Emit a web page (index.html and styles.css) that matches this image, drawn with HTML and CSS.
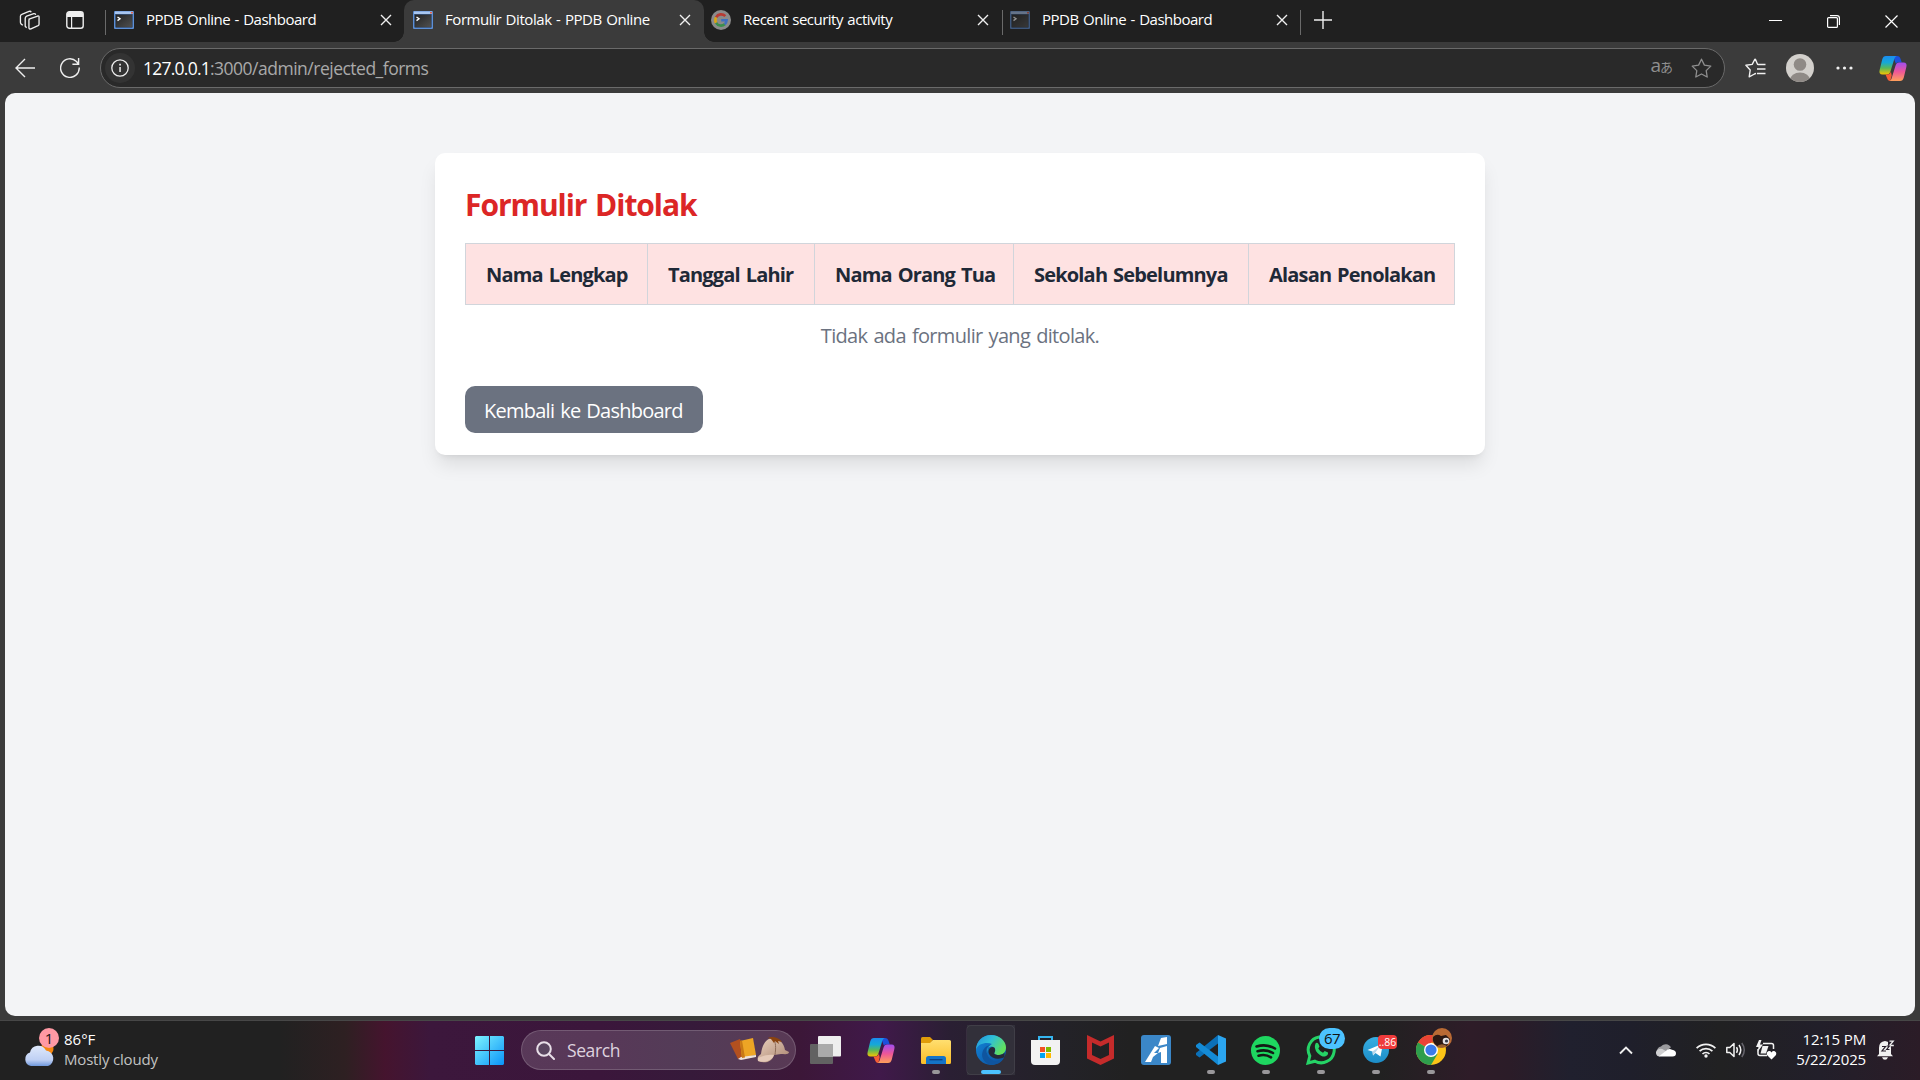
FILE: index.html
```
<!DOCTYPE html>
<html lang="id">
<head>
<meta charset="utf-8">
<title>Formulir Ditolak - PPDB Online</title>
<link rel="stylesheet" href="styles.css">
</head>
<body>
<svg class="defs" width="0" height="0" aria-hidden="true">
  <defs>
    <linearGradient id="cpA" x1="0" y1="0" x2="0" y2="1"><stop offset="0" stop-color="#1b8cf0"/><stop offset=".35" stop-color="#15a8d8"/><stop offset=".65" stop-color="#58b85a"/><stop offset="1" stop-color="#f5c400"/></linearGradient>
    <linearGradient id="cpB" x1="0" y1="0" x2="0" y2="1"><stop offset="0" stop-color="#a04df0"/><stop offset=".5" stop-color="#ee5698"/><stop offset="1" stop-color="#ffa05a"/></linearGradient>
    <linearGradient id="win" x1="0" y1="0" x2="1" y2="1"><stop offset="0" stop-color="#7df3ff"/><stop offset="1" stop-color="#0a93f8"/></linearGradient>
    <linearGradient id="fold" x1="0" y1="0" x2="0" y2="1"><stop offset="0" stop-color="#ffdf70"/><stop offset="1" stop-color="#fbbd27"/></linearGradient>
    <linearGradient id="edgeTop" x1="0" y1="0" x2="1" y2=".5"><stop offset="0" stop-color="#2390dc"/><stop offset=".5" stop-color="#2fc0d8"/><stop offset="1" stop-color="#62e05e"/></linearGradient>
    <linearGradient id="edgeLow" x1="0" y1="0" x2="1" y2="1"><stop offset="0" stop-color="#1287dc"/><stop offset="1" stop-color="#0c4c98"/></linearGradient>
    <linearGradient id="cloud" x1="0" y1="0" x2="0" y2="1"><stop offset="0" stop-color="#dfe9fb"/><stop offset=".7" stop-color="#bfd0f4"/><stop offset="1" stop-color="#6f98dc"/></linearGradient>
    <linearGradient id="cap" x1="0" y1="0" x2="1" y2="1"><stop offset="0" stop-color="#ead0bd"/><stop offset="1" stop-color="#a98570"/></linearGradient>
    <linearGradient id="tg" x1="0" y1="0" x2="0" y2="1"><stop offset="0" stop-color="#37aee2"/><stop offset="1" stop-color="#1c8dc8"/></linearGradient>
    <linearGradient id="term" x1="0" y1="0" x2="1" y2="1"><stop offset="0" stop-color="#222"/><stop offset="1" stop-color="#505050"/></linearGradient>
    <symbol id="terminal" viewBox="0 0 20 18">
      <rect width="20" height="18" rx="1" fill="#5c8fd6"/><rect x="1" y=".5" width="18" height="2.5" fill="#a9c6ef"/><rect x="17" y="1" width="2" height="1.5" fill="#e0604c"/><rect x="1.8" y="3.6" width="16.4" height="12.6" fill="url(#term)" stroke="#222c3c" stroke-width=".5"/>
      <path d="M3.5 6l2.5 1.8-2.5 1.8" fill="none" stroke="#fff" stroke-width="1.4"/>
    </symbol>
    <symbol id="close" viewBox="0 0 12 12"><path d="M1 1l10 10M11 1L1 11" stroke="#f0f0f0" stroke-width="1.4" fill="none"/></symbol>
    <symbol id="copilot" viewBox="0 0 28 27">
      <path d="M14 1h4c2 0 3 1 3.600 3l1.200 3.500h-4.500l-1.500 1z" fill="#1c50dc"/>
      <path d="M7 1h10.500c-1.500.8-2 2.200-2.600 4.300L11.600 16c-.8 2.400-1.700 3.500-4 3.500H3.500C.8 19.500 0 17.600.6 15.200L3.200 4.500C3.900 2.100 5 1 7 1z" fill="url(#cpA)"/>
      <path d="M6.500 19.500h2c2 0 2.700-1 3.400-3l.8 4-1.400 5.500C9.500 26 8.700 25 8 23z" fill="#f65c35"/>
      <path d="M21 26H10.500c1.500-.8 2-2.200 2.600-4.300L16.400 11c.8-2.400 1.700-3.500 4-3.500h4.100c2.700 0 3.500 1.900 2.900 4.300l-2.600 10.700C24.100 24.900 23 26 21 26z" fill="url(#cpB)"/>
    </symbol>
  </defs>
</svg>

<div class="browser">
  <header class="tabstrip">
    <div class="strip-tools">
      <svg width="21" height="21" viewBox="0 0 22 22" fill="none" stroke="#eee" stroke-width="1.400" stroke-linejoin="round"><path d="M10.500 9.500l9-3.200q1.500-.4 1.500 1v7.500q0 1-1 1.500l-7.500 3.500q-1.800.5-2.100-1v-8q0-1 .6-1.300z"/><path d="M8 18.500l-1.500-1.500V9q0-1.800 1.500-2.500L15.500 3.800q1.600-.3 1.900 1.300M4 16l-1.700-1.200q-.8-.8-.8-2V6.500q0-1.500 1.400-2L10.500 1.500q1.700-.5 2.300.8"/></svg>
      <svg class="tab-actions" width="18" height="18" viewBox="0 0 18 18"><rect x=".8" y=".8" width="16.400" height="16.400" rx="2.500" fill="none" stroke="#eee" stroke-width="1.400"/><path d="M1 6V3a2 2 0 0 1 2-2h12a2 2 0 0 1 2 2v3zM5 6h1.200v11H5z" fill="#eee"/></svg>
    </div>
    <div class="tab tab-ruled"><svg class="favicon" width="20" height="18"><use href="#terminal"/></svg><span class="tab-title">PPDB Online - Dashboard</span><svg class="tab-close" width="12" height="12"><use href="#close"/></svg></div>
    <div class="tab tab-active"><svg class="favicon" width="20" height="18"><use href="#terminal"/></svg><span class="tab-title title-form">Formulir Ditolak - PPDB Online</span><svg class="tab-close" width="12" height="12"><use href="#close"/></svg></div>
    <div class="tab tab-google"><svg class="favicon" width="20" height="20" viewBox="0 0 20 20" fill="none" stroke-width="2.600"><circle cx="10" cy="10" r="10" fill="#8b8b8b"/><path d="M14.300 6.200A5.700 5.700 0 0 0 5.100 7.300" stroke="#b83a33"/><path d="M5.100 7.300a5.700 5.700 0 0 0 0 5.600" stroke="#d9a414"/><path d="M5.100 12.900a5.700 5.700 0 0 0 8.600 1.300" stroke="#3a8f4c"/><path d="M13.700 14.200a5.700 5.700 0 0 0 1.900-4H10.200" stroke="#3f6fc0"/></svg><span class="tab-title">Recent security activity</span><svg class="tab-close" width="12" height="12"><use href="#close"/></svg></div>
    <div class="tab tab-last"><svg class="favicon favicon-dim" width="20" height="18"><use href="#terminal"/></svg><span class="tab-title">PPDB Online - Dashboard</span><svg class="tab-close" width="12" height="12"><use href="#close"/></svg></div>
    <svg class="new-tab" width="18" height="18" viewBox="0 0 18 18"><path d="M9 0v18M0 9h18" stroke="#eee" stroke-width="1.400"/></svg>
    <div class="window-buttons">
      <svg width="13" height="13" viewBox="0 0 13 13"><path d="M0 5.500h13" stroke="#fff"/></svg>
      <svg width="13" height="13" viewBox="0 0 13 13" fill="none" stroke="#fff" stroke-width="1.200"><rect x=".6" y="2.600" width="9.800" height="9.800" rx="1"/><path d="M3 .6h7q2.400 0 2.400 2.400v7"/></svg>
      <svg width="13" height="13" viewBox="0 0 13 13"><path d="M.5.5l12 12M12.500.5l-12 12" stroke="#fff" stroke-width="1.200"/></svg>
    </div>
  </header>

  <nav class="toolbar">
    <svg class="back" width="20" height="20" viewBox="0 0 20 20" fill="none" stroke="#eee" stroke-width="1.400"><path d="M20 10H1M10 1L1 10l9 9"/></svg>
    <svg class="reload" width="20" height="20" viewBox="0 0 20 20" fill="none" stroke="#eee" stroke-width="1.400"><path d="M19.200 9.500a9.300 9.300 0 1 1-2.700-6L18.500 6M18.600 0v6.200h-6.200"/></svg>
    <div class="address">
      <span class="site-info"><svg width="18" height="18" viewBox="0 0 18 18"><circle cx="9" cy="9" r="8.200" fill="none" stroke="#eee" stroke-width="1.300"/><path d="M8.300 8h1.500v5H8.300zM8.200 4.800h1.700v1.700H8.200z" fill="#eee"/></svg></span>
      <span class="host">127.0.0.1</span><span class="path">:3000/admin/rejected_forms</span>
      <span class="translate">a<small>あ</small></span>
      <svg class="fav-star" width="21" height="20" viewBox="0 0 21 20"><path d="M10.500 1.200l2.900 5.900 6.400 1-4.600 4.500 1 6.400-5.700-3-5.700 3 1-6.400L1.200 8.100l6.400-1z" fill="none" stroke="#8f8f8f" stroke-width="1.300" stroke-linejoin="round"/></svg>
    </div>
    <svg class="favorites" width="21" height="20" viewBox="0 0 21 20" fill="none" stroke="#f0f0f0" stroke-width="1.400" stroke-linejoin="round"><path d="M13.500 6.600L12.500 6.300 10.500 1.500q-.4-.6-.8 0L7.200 6.400.9 7.300l4.300 4.700-1 6.800 5.300-2.800 1.500-.6M13 6.500H20.500M12 11h8.500M12 15.500h8.500"/></svg>
    <svg class="avatar" width="28" height="28" viewBox="0 0 28 28"><defs><clipPath id="av"><circle cx="14" cy="14" r="14"/></clipPath></defs><g clip-path="url(#av)"><rect width="28" height="28" fill="#d3d0cc"/><circle cx="14" cy="10.500" r="6.300" fill="#8f8a86"/><ellipse cx="14" cy="26" rx="10" ry="7.500" fill="#8f8a86"/></g></svg>
    <svg class="more" width="17" height="4" viewBox="0 0 17 4" fill="#f0f0f0"><circle cx="2" cy="2" r="1.600"/><circle cx="8.500" cy="2" r="1.600"/><circle cx="15" cy="2" r="1.600"/></svg>
    <svg class="sidebar-copilot" width="28" height="27"><use href="#copilot"/></svg>
  </nav>

  <main class="page">
    <section class="card">
      <h1 class="card-title">Formulir Ditolak</h1>
      <table class="forms">
        <colgroup><col class="c-name"><col class="c-date"><col class="c-parent"><col class="c-school"><col class="c-reason"></colgroup>
        <thead><tr><th>Nama Lengkap</th><th>Tanggal Lahir</th><th>Nama Orang Tua</th><th>Sekolah Sebelumnya</th><th>Alasan Penolakan</th></tr></thead>
      </table>
      <p class="empty">Tidak ada formulir yang ditolak.</p>
      <a class="button">Kembali ke Dashboard</a>
    </section>
  </main>
</div>

<footer class="taskbar">
  <div class="weather">
    <div class="weather-icon">
      <svg width="31" height="28" viewBox="0 0 31 28"><circle cx="23" cy="9" r="6.500" fill="#f5860f"/><path d="M7 26a7 7 0 0 1-1-13.500A8.500 8.500 0 0 1 22 10.500 8 8 0 0 1 24 26z" fill="url(#cloud)"/></svg>
      <span class="weather-badge">1</span>
    </div>
    <div class="weather-text"><span>86°F</span><span class="weather-sub">Mostly cloudy</span></div>
  </div>
  <div class="app start"><svg width="29" height="29" viewBox="0 0 29 29" fill="url(#win)"><path d="M1 0h13v14H0V1zM15 0h13l1 1v13H15zM0 15h14v14H1l-1-1zM15 15h14v13l-1 1H15z"/></svg></div>
  <div class="search">
    <svg width="19" height="19" viewBox="0 0 19 19" fill="none" stroke="#e8dfe8" stroke-width="2"><circle cx="8" cy="8" r="6.800" fill="#5a4660"/><path d="M13 13l5 5" stroke-linecap="round"/></svg>
    <span class="search-label">Search</span>
    <svg class="search-art" width="59" height="26" viewBox="0 0 59 26">
      <path d="M0 6l10-4 7 17-9 3z" fill="#b3501f"/><path d="M10 4l13-3 3 17-14 3z" fill="#eda525"/><path d="M8 22l3-2 15-2v2l-15 3z" fill="#eee3dc"/><path d="M10 4l2-.5 3 17-3 .5z" fill="#c87916"/>
      <path d="M31 17C32 7 37 1 43 1s11 5 12 12l4 2c0 3-5 2-8 2l-7 1c-2 7-9 9-16 6-1-3 0-5 3-7z" fill="url(#cap)"/><path d="M43 1c3 4 3 10 2 17" stroke="#8d6b58" fill="none"/><path d="M38 1c3-2 11-1 14 4l-4-1 1 3-4-3-1 2-3-4z" fill="#8a4310"/><path d="M28 21c5-2 9-4 16-3-2 6-9 8-16 6z" fill="#e4c9b8"/>
    </svg>
  </div>
  <div class="apps">
    <div class="app"><svg width="31" height="28" viewBox="0 0 31 28"><rect y="8" width="23" height="20" rx="1" fill="#626262"/><rect x="8" width="23" height="20.500" rx="1" fill="#eee"/><path d="M8 8h15v12.500H8z" fill="#aaa"/></svg></div>
    <div class="app"><svg width="28" height="27"><use href="#copilot"/></svg></div>
    <div class="app app-open"><svg width="30" height="27" viewBox="0 0 30 27"><path d="M0 1.500Q0 0 1.500 0H9l3 3-3 4H0z" fill="#e09c0a"/><path d="M0 6h9l3-3h16.500Q30 3 30 4.500v21q0 1.500-1.500 1.500h-27Q0 27 0 25.500z" fill="url(#fold)"/><path d="M5 27v-5.500Q5 19 7.500 19h15q2.500 0 2.500 2.500V27z" fill="#1474c8"/><path d="M8.500 22.700h13" stroke="#0b4080" stroke-width="1.300"/></svg></div>
    <div class="app app-current"><svg width="30" height="30" viewBox="0 0 30 30"><circle cx="15" cy="15" r="15" fill="url(#edgeLow)"/><path d="M11 19c0-5 1.500-8 5-10C11 7 2 8 0 15 0 6.500 6.500 0 15 0s15 6 15 12.500c0 5-3.500 7.500-7.500 7.500-3 0-5-1-4-2.500 1.500-2 .5-6-3-6-4 0-5.500 4-4.500 7.500z" fill="url(#edgeTop)"/><path d="M10.500 15c0 7 5 11 10 11 3 0 5-1 7.500-3-3 5-8 7-12.500 7-6-1-11-7-9-13 1-3 3-6 8-7-3 1-4 3-4 5z" fill="#0f559f"/><path d="M18.500 17.500c-1 1.500 1 2.500 4 2.500 3 0 5-1 6-2.500v4.500c-5 3-13 2-15.500-3-1.500-4 1-7 3.500-7s3.500 3 2 5.500z" fill="#252a38"/></svg></div>
    <div class="app"><svg width="29" height="29" viewBox="0 0 29 29"><path d="M8 5V1h13v4" fill="none" stroke="#35b5f0" stroke-width="2"/><path d="M0 4h29v21q0 4-4 4H4q-4 0-4-4z" fill="#f2f2f2"/><path d="M9 11h5v5H9z" fill="#f25022"/><path d="M15 11h5v5h-5z" fill="#7fba00"/><path d="M9 17h5v5H9z" fill="#00a4ef"/><path d="M15 17h5v5h-5z" fill="#ffb900"/></svg></div>
    <div class="app"><svg width="27" height="30" viewBox="0 0 27 30"><path d="M0 0l13.500 6.500L27 0v23.500L13.500 30 0 23.500zM5 7.500V20l8.500 4 8.500-4V7.500l-8.500 4z" fill="#c52b2b" fill-rule="evenodd"/></svg></div>
    <div class="app"><svg width="30" height="30" viewBox="0 0 30 30"><rect width="30" height="30" rx="3" fill="#3b87c8"/><path d="M20 3l6-1v7l-9 2zM14 11l4 2-5 5h4l-5 4-2 5H4zM19 13l7-2v17h-6V17l-3 1z" fill="#fff"/></svg></div>
    <div class="app app-open"><svg width="30" height="30" viewBox="0 0 30 30"><path d="M22 0l8 3.500v23L22 30z" fill="#2ba5ef"/><path d="M22 0v8.500L3.500 22.500 0 20v-2z" fill="#0b70b8"/><path d="M22 30v-8.500L3.500 7.500 0 10v2z" fill="#148bd6"/></svg></div>
    <div class="app app-open"><svg width="29" height="29" viewBox="0 0 29 29"><circle cx="14.500" cy="14.500" r="14.500" fill="#1ed760"/><path d="M5.500 10.500q10-3 18.500 2M6.500 15.200q8.500-2.400 15.500 1.800M7.500 19.700q7-2 12.500 1.600" fill="none" stroke="#141a16" stroke-width="2.600" stroke-linecap="round"/></svg></div>
    <div class="app app-open"><svg width="30" height="30" viewBox="0 0 30 30"><path d="M2 28l1.800-7A13 13 0 1 1 9 26.200z" fill="none" stroke="#25d366" stroke-width="3"/><path d="M9.500 8.500q1.500-1.500 3 .5l1 2.500-1.200 2q1.500 3 4.700 4.300l1.700-1.800 3.300 1.600q.5 3-3 3.900-3.500.4-7.500-3.600-4-4.400-2-9.400z" fill="#25d366"/></svg><span class="badge badge-blue">67</span></div>
    <div class="app app-open"><svg width="26" height="26" viewBox="0 0 26 26"><circle cx="13" cy="13" r="13" fill="url(#tg)"/><path d="M4.500 13L20 6.500l-2.500 13-5-3.500-2.500 2.500-.5-4z" fill="#fff"/><path d="M9.500 14.500L17 9l-5 7-2 2.500z" fill="#b8d8ec"/></svg><span class="badge badge-red">..86</span></div>
    <div class="app app-open"><svg width="30" height="30" viewBox="0 0 30 30"><circle cx="15" cy="15" r="15" fill="#fcc417"/><path d="M15 15L2 7.500A15 15 0 0 1 28 7.500H15z" fill="#ea4335"/><path d="M15 15L2 7.500A15 15 0 0 0 15 30l6.500-11z" fill="#2e9e4d"/><circle cx="15" cy="15" r="7" fill="#fff"/><circle cx="15" cy="15" r="5.600" fill="#3a7bea"/></svg>
      <svg class="profile" width="20" height="20" viewBox="0 0 20 20"><circle cx="10" cy="10" r="10" fill="#b96a34"/><path d="M1 9q4-4 8-1l5-1 4 4-3 7H5q-5-3-4-9z" fill="#2b1813"/><circle cx="14" cy="13" r="3.300" fill="#e5e2e2"/><circle cx="14.500" cy="13" r="1.600" fill="#353c4b"/><path d="M4 19q5-5 11-1-5 3-11 1z" fill="#9a612e"/></svg></div>
  </div>
  <div class="tray">
    <svg class="t-chevron" width="14" height="9" viewBox="0 0 14 9"><path d="M1 7.500l6-6 6 6" fill="none" stroke="#eee" stroke-width="1.900"/></svg>
    <svg class="t-cloud" width="20" height="14" viewBox="0 0 20 14"><path d="M1 8a5 5 0 0 1 4-4.500 6 6 0 0 1 10 .8L8 10z" fill="#9a9a9e"/><path d="M3.500 13.500A3.700 3.700 0 0 1 2 6.500q3-1.500 6 .5l4 2z" fill="#d0d0d2"/><path d="M3 13.200l6.500-5q3-3.200 6.500-1.500 4 .6 4 3.500 0 3.300-3.500 3.300H5q-1.200 0-2-.3z" fill="#fff"/></svg>
    <svg class="t-wifi" width="20" height="16" viewBox="0 0 20 16" fill="none" stroke="#f2f2f2" stroke-width="1.700"><path d="M.6 6.200a13.300 13.300 0 0 1 18.800 0M3.600 9.200a9 9 0 0 1 12.800 0M6.500 12a5 5 0 0 1 7 0"/><circle cx="10" cy="14" r="1.700" fill="#f2f2f2" stroke="none"/></svg>
    <svg class="t-sound" width="20" height="16" viewBox="0 0 20 16" fill="none" stroke="#f2f2f2" stroke-width="1.500"><path d="M.8 5.500h3L8 1.500v13L3.800 10.500h-3z" stroke-linejoin="round"/><path d="M10.500 5.200q1.800 2.800 0 5.600M13 3q3.500 5 0 10"/><path d="M15.800 1q5 7 0 14" stroke="#66646c"/></svg>
    <svg class="t-battery" width="21" height="20" viewBox="0 0 21 20"><path d="M7 3.500h8.500q2 0 2 2V9M2 9v4.500q0 2 2 2h7" fill="none" stroke="#f2f2f2" stroke-width="1.500"/><path d="M6.500 6h6L10 13.500H4.500z" fill="#f2f2f2"/><path d="M3 0L0 7h2.500L1.500 12 7 4.500H4L5.500 0z" fill="#f2f2f2"/><path d="M15.500 19.500L11 15q-1-3 1.700-4 1.800-.3 2.800 1.400 1-1.700 2.800-1.400 2.700 1 1.700 4z" fill="#fff"/></svg>
    <div class="clock"><span>12:15 PM</span><span>5/22/2025</span></div>
    <svg class="t-bell" width="18" height="20" viewBox="0 0 18 20"><path d="M2 14V8q0-6.500 6-7 6 .5 6 7v6l2 2.200H0zM5 17.300h6q-1 2.500-3 2.500t-3-2.500z" fill="#f0f0f0"/><path d="M11 0h6.500v6H11z" fill="#251d29"/><path d="M12.500 1.200h3.700L12.500 5.500h4.300" fill="none" stroke="#f0f0f0" stroke-width="1.300"/><path d="M5 6.500h3.500L5 11h4M9.700 6h2.600L9.700 9.500h2.800" fill="none" stroke="#251d29" stroke-width="1.200"/></svg>
  </div>
</footer>
</body>
</html>
```

FILE: styles.css
```
* { box-sizing: border-box; }

body {
  margin: 0;
  width: 1920px;
  height: 1080px;
  overflow: hidden;
  display: flex;
  flex-direction: column;
  background: #3b3b3b;
  font-family: "Open Sans", "Noto Sans", sans-serif;
  font-size: 15px;
  color: #fff;
}

svg { display: block; flex: none; }
.defs { position: absolute; }

.browser {
  height: 1020px;
  flex: none;
  display: flex;
  flex-direction: column;
}

/* Tab strip */
.tabstrip {
  height: 42px;
  flex: none;
  display: flex;
  background: #202020;
}
.strip-tools {
  width: 104px;
  height: 40px;
  padding-left: 19px;
  display: flex;
  align-items: center;
  gap: 26px;
}
.tab {
  width: 299px;
  height: 42px;
  padding: 0 13px 2px 9px;
  display: flex;
  align-items: center;
}
.tab-ruled {
  width: 300px;
  padding-left: 10px;
  padding-right: 12px;
  background: linear-gradient(#6a6a6a, #6a6a6a) 1px 10px / 1px 25px no-repeat;
}
.tab-active {
  position: relative;
  width: 300px;
  border-radius: 10px 10px 0 0;
  background: #3b3b3b;
}
.tab-active::before,
.tab-active::after {
  content: "";
  position: absolute;
  bottom: 0;
  width: 10px;
  height: 10px;
}
.tab-active::before {
  left: -10px;
  background: radial-gradient(circle at 0 0, #202020 9.5px, #3b3b3b 10px);
}
.tab-active::after {
  right: -10px;
  background: radial-gradient(circle at 100% 0, #202020 9.5px, #3b3b3b 10px);
}
.favicon { margin-right: 12px; }
.favicon-dim { opacity: .5; }
.tab-title {
  flex: 1;
  padding-bottom: 2px;
  line-height: 20px;
  white-space: nowrap;
  letter-spacing: -.5px;
  word-spacing: 1px;
}
.title-form { letter-spacing: -.44px; }
.tab-google { width: 298px; padding-left: 7px; }
.tab-last {
  padding-left: 8px;
  background: linear-gradient(#6a6a6a, #6a6a6a) 0 10px / 1px 25px no-repeat,
    linear-gradient(#6a6a6a, #6a6a6a) 298px 10px / 1px 25px no-repeat;
}
.new-tab { margin: 11px 0 0 13px; }
.window-buttons {
  margin-left: auto;
  padding: 15px 22px 0 0;
  display: flex;
  gap: 45px;
}

/* Address row */
.toolbar {
  height: 51px;
  flex: none;
  padding: 1px 13px 0 15px;
  display: flex;
  align-items: center;
}
.reload { margin-left: 25px; }
.address {
  width: 1625px;
  height: 40px;
  margin-left: 20px;
  padding: 0 12px 0 4px;
  display: flex;
  align-items: center;
  border: 1px solid #6a6a6a;
  border-radius: 20px;
  background: #292929;
  font-size: 17.5px;
}
.site-info {
  width: 30px;
  height: 30px;
  margin-right: 8px;
  display: grid;
  place-items: center;
  border-radius: 50%;
  background: #333;
}
.host { letter-spacing: -.76px; padding-bottom: 1px; }
.path { letter-spacing: -.5px; padding-bottom: 1px; color: #a9a9a9; }
.translate {
  margin-left: auto;
  padding-bottom: 4px;
  display: flex;
  align-items: baseline;
  color: #8f8f8f;
  font-size: 19px;
  line-height: 22px;
  white-space: nowrap;
}
.translate small {
  font-family: "Noto Sans CJK JP", sans-serif;
  font-size: 13px;
  margin-left: -1px;
}
.fav-star { margin-left: 18px; }
.favorites { margin-left: 20px; }
.avatar { margin-left: 20px; }
.more { margin-left: 22px; }
.sidebar-copilot { margin-left: auto; }

/* Page */
.page {
  height: 923px;
  flex: none;
  margin: 0 5px;
  padding-top: 60px;
  border-radius: 10px;
  background: #f3f4f6;
}
.card {
  width: 1050px;
  height: 302px;
  margin: 0 auto;
  padding: 32px 30px 20px;
  border-radius: 10px;
  background: #fff;
  color: #1f2937;
  font-size: 20px;
  box-shadow: 0 12.5px 18.75px -3.75px rgba(0, 0, 0, .1), 0 5px 7.5px -5px rgba(0, 0, 0, .1);
}
.card-title {
  margin: 0 0 18px;
  color: #dc2626;
  font-size: 30px;
  font-weight: 700;
  line-height: 40px;
  letter-spacing: -1.05px;
  word-spacing: 2px;
}
.forms {
  width: 990px;
  table-layout: fixed;
  border-collapse: collapse;
}
.c-name { width: 182px; }
.c-date { width: 167px; }
.c-parent { width: 199px; }
.c-school { width: 235px; }
.c-reason { width: 206px; }
.forms th {
  height: 61px;
  padding: 1px 0 0 20px;
  border: 1px solid #d1d5db;
  background: #fee2e2;
  font-weight: 700;
  line-height: 30px;
  letter-spacing: -.82px;
  word-spacing: 1.5px;
  text-align: left;
  white-space: nowrap;
}
.empty {
  margin: 16px 0 35px;
  color: #6b7280;
  line-height: 30px;
  letter-spacing: -.67px;
  word-spacing: 1.5px;
  text-align: center;
}
.button {
  width: 238px;
  height: 47px;
  padding: 2px 0 0 19px;
  display: flex;
  align-items: center;
  border-radius: 10px;
  background: #6b7280;
  color: #fff;
  letter-spacing: -.75px;
  word-spacing: 1.5px;
  white-space: nowrap;
}

/* Taskbar */
.taskbar {
  height: 60px;
  flex: none;
  padding-bottom: 1px;
  display: flex;
  align-items: center;
  border-top: 1px solid #474747;
  background: linear-gradient(90deg, #212121 0, #212121 280px, #2e2022 345px, #45142e 385px, #3c173c 430px, #3b163b 600px, #361a3a 690px, #3c1738 800px, #40194a 880px, #2a1f33 950px, #232228 1060px, #212121 1130px, #212121 1380px, #2e1c28 1470px, #2b1c28 1510px, #20202e 1570px, #1f1f2b 1630px, #212122 1720px, #221f2a 1820px, #2b1c27 1920px);
}
.weather {
  width: 462px;
  padding-left: 24px;
  display: flex;
  align-items: center;
  gap: 9px;
}
.weather-icon { position: relative; padding-top: 8px; }
.weather-badge {
  position: absolute;
  left: 15px;
  top: -4px;
  width: 20px;
  height: 20px;
  border-radius: 50%;
  background: #ff99a4;
  color: #1c1416;
  line-height: 20px;
  text-align: center;
}
.weather-text, .clock {
  display: flex;
  flex-direction: column;
  line-height: 20px;
  margin-top: -3px;
}
.weather-sub { color: #c3c3c3; letter-spacing: -.18px; }
.app {
  position: relative;
  width: 55px;
  height: 50px;
  display: grid;
  place-items: center;
}
.search {
  width: 275px;
  height: 40px;
  margin: 0 2px 0 4px;
  padding: 0 6px 0 14px;
  display: flex;
  align-items: center;
  border: 1px solid rgba(255, 255, 255, .17);
  border-radius: 20px;
  background: rgba(255, 255, 255, .15);
}
.search-label {
  margin-left: 12px;
  color: #ded2df;
  font-size: 17.5px;
  line-height: 24px;
  letter-spacing: -.4px;
}
.search-art { margin-left: auto; }
.apps { display: flex; }
.app-open::before,
.app-current::before {
  content: "";
  position: absolute;
  bottom: 1px;
  left: 24px;
  width: 8px;
  height: 4px;
  border-radius: 2px;
  background: #99979a;
}
.app-current::before { left: 18px; width: 20px; background: #4cc2ff; }
.app-current {
  background: linear-gradient(#32303a, #32303a) center / 48px 50px no-repeat;
}
.app-current::after {
  content: "";
  position: absolute;
  inset: 0 3px;
  border: 1px solid rgba(255, 255, 255, .07);
  border-radius: 5px;
}
.badge { position: absolute; text-align: center; }
.badge-blue {
  left: 26px;
  top: 3px;
  width: 26px;
  height: 21px;
  border-radius: 10.5px;
  background: #4cc2ff;
  color: #111;
  line-height: 21px;
  letter-spacing: -.5px;
}
.badge-red {
  left: 30px;
  top: 10px;
  width: 19px;
  height: 14px;
  border-radius: 4px;
  background: #ef3b3b;
  font-size: 10.5px;
  line-height: 14px;
}
.profile { position: absolute; left: 29px; top: 3px; }
.tray {
  margin-left: auto;
  padding-right: 25px;
  display: flex;
  align-items: center;
}
.t-cloud { margin-left: 23px; }
.t-wifi { margin-left: 20px; }
.t-sound { margin-left: 10px; }
.t-battery { margin-left: 10px; }
.clock {
  width: 89px;
  align-items: flex-end;
  letter-spacing: -.15px;
}
.t-bell { margin-left: 11px; }
```
